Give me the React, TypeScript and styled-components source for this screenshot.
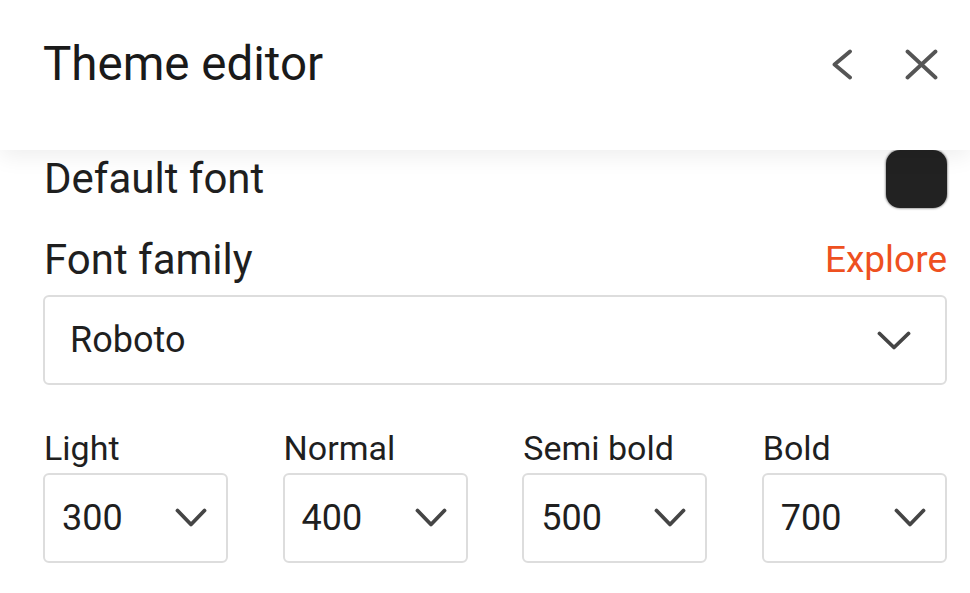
import React from "react";
import styled, { createGlobalStyle } from "styled-components";

const Global = createGlobalStyle`
  html, body { margin: 0; padding: 0; background: #ffffff; }
  body { font-family: Roboto, "Liberation Sans", Arial, sans-serif; color: #1f1f1f; overflow: hidden; }
  * { box-sizing: border-box; }
`;

const Page = styled.div`
  width: 970px;
  height: 593px;
  background: #ffffff;
  display: flex;
  flex-direction: column;
`;

const Header = styled.header`
  position: relative;
  z-index: 2;
  height: 150px;
  flex: 0 0 150px;
  background: #ffffff;
  box-shadow: 0 6px 22px rgba(0, 0, 0, 0.07);
  padding: 40px 32px 0 43px;
  display: flex;
  align-items: flex-start;
`;

const HeaderRow = styled.div`
  flex: 1;
  height: 48px;
  display: flex;
  align-items: center;
  justify-content: space-between;
`;

const Title = styled.h1`
  margin: 0;
  font-size: 47.5px;
  line-height: 48px;
  font-weight: 400;
  color: #1a1a1a;
`;

const IconGroup = styled.div`
  display: flex;
  align-items: center;
  gap: 53px;
`;

const IconButton = styled.button`
  border: 0;
  background: none;
  padding: 0;
  margin: 0;
  display: flex;
  align-items: center;
  justify-content: center;
  color: #555555;
  cursor: pointer;
`;

const Content = styled.main`
  flex: 1;
  padding: 0 23px 0 43px;
  display: flex;
  flex-direction: column;
`;

const SectionRow = styled.div<{ $top: number; $h: number }>`
  margin-top: ${(p) => p.$top}px;
  height: ${(p) => p.$h}px;
  display: flex;
  align-items: center;
  justify-content: space-between;
`;

const SectionLabel = styled.span`
  font-size: 42px;
  line-height: 42px;
  color: #1f1f1f;
  padding-left: 1px;
`;

const ExploreLink = styled.a`
  font-size: 37px;
  line-height: 42px;
  color: #ee5020;
  text-decoration: none;
`;

const Swatch = styled.div`
  width: 61px;
  height: 58px;
  border-radius: 14px;
  background: #222222;
  box-shadow: 0 0 2px 1px rgba(0, 0, 0, 0.35);
`;

const SelectBox = styled.div<{ $pl: number; $pr: number }>`
  height: 90px;
  flex: 0 0 90px;
  border: 2px solid #dddddd;
  border-radius: 6px;
  background: #ffffff;
  display: flex;
  align-items: center;
  justify-content: space-between;
  padding: 0 ${(p) => p.$pr}px 0 ${(p) => p.$pl}px;
`;

const BigSelect = styled(SelectBox)`
  margin-top: 14px;
`;

const SelectValue = styled.span`
  font-size: 36px;
  line-height: 36px;
  color: #1f1f1f;
`;

const WeightGrid = styled.div`
  margin-top: 46px;
  display: grid;
  grid-template-columns: repeat(4, 185px);
  column-gap: 54.6px;
`;

const WeightCol = styled.div`
  display: flex;
  flex-direction: column;
  gap: 7.6px;
`;

const WeightLabel = styled.span`
  font-size: 34px;
  line-height: 34px;
  color: #1f1f1f;
  padding-left: 1px;
`;

const Chevron = ({ w, h }: { w: number; h: number }) => (
  <svg width={w} height={h} viewBox={`0 0 ${w} ${h}`} fill="none">
    <polyline
      points={`2.5,2.5 ${w / 2},${h - 2.5} ${w - 2.5},2.5`}
      stroke="#454545"
      strokeWidth="3.8"
      strokeLinecap="round"
      strokeLinejoin="round"
    />
  </svg>
);

const BackIcon = () => (
  <svg width="20" height="31" viewBox="0 0 20 31" fill="none">
    <polyline
      points="18,2.5 2.5,15.5 18,28.5"
      stroke="#555"
      strokeWidth="3.8"
      strokeLinecap="round"
      strokeLinejoin="round"
    />
  </svg>
);

const CloseIcon = () => (
  <svg width="33" height="31" viewBox="0 0 33 31" fill="none">
    <path
      d="M2.5 2.5 L30.5 28.5 M30.5 2.5 L2.5 28.5"
      stroke="#555"
      strokeWidth="3.8"
      strokeLinecap="round"
    />
  </svg>
);

const weights = [
  { label: "Light", value: "300" },
  { label: "Normal", value: "400" },
  { label: "Semi bold", value: "500" },
  { label: "Bold", value: "700" },
];

export default function App() {
  return (
    <>
      <Global />
      <Page>
        <Header>
          <HeaderRow>
            <Title>Theme editor</Title>
            <IconGroup>
              <IconButton aria-label="Back">
                <BackIcon />
              </IconButton>
              <IconButton aria-label="Close">
                <CloseIcon />
              </IconButton>
            </IconGroup>
          </HeaderRow>
        </Header>
        <Content>
          <SectionRow $top={0} $h={58}>
            <SectionLabel>Default font</SectionLabel>
            <Swatch />
          </SectionRow>
          <SectionRow $top={31} $h={42}>
            <SectionLabel>Font family</SectionLabel>
            <ExploreLink href="#">Explore</ExploreLink>
          </SectionRow>
          <BigSelect $pl={25} $pr={34}>
            <SelectValue>Roboto</SelectValue>
            <Chevron w={34} h={19} />
          </BigSelect>
          <WeightGrid>
            {weights.map((w) => (
              <WeightCol key={w.label}>
                <WeightLabel>{w.label}</WeightLabel>
                <SelectBox $pl={17} $pr={19}>
                  <SelectValue>{w.value}</SelectValue>
                  <Chevron w={32} h={19} />
                </SelectBox>
              </WeightCol>
            ))}
          </WeightGrid>
        </Content>
      </Page>
    </>
  );
}
